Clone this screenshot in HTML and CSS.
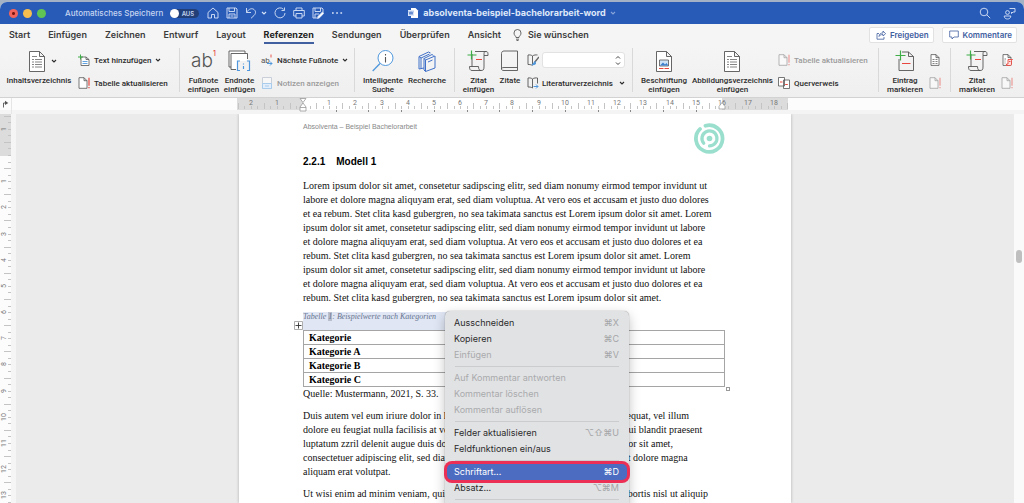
FILE: index.html
```html
<!DOCTYPE html>
<html lang="de">
<head>
<meta charset="utf-8">
<meta name="viewport" content="width=device-width, initial-scale=1">
<title>absolventa-beispiel-bachelorarbeit-word</title>
<link rel="stylesheet" href="styles.css">
</head>
<body>
<svg class="defs" aria-hidden="true">
  <symbol id="chev" viewBox="0 0 6 6"><path d="M1 2l2 2 2-2" fill="none" stroke="currentColor" stroke-width="1.1"/></symbol>
  <symbol id="doc-mark" viewBox="0 0 12 12"><path d="M1 .7h5l3 3v7.6H1zM6 .7v3h3" fill="#fff" stroke="#555" stroke-width=".8"/><path d="M11 .7v8M11 10v1.3" stroke="#e8473f" stroke-width="1.2"/></symbol>
  <symbol id="doc-lines" viewBox="0 0 16 21"><path d="M.5.5h10l5 5v15H.5zM10.500.5v5h5" fill="#fff" stroke="#555" stroke-width=".9"/><path d="M3 5.500h5M3 8.500h2m1 0h7M3 11h2m1 0h7M3 13.500h2m1 0h7M3 16h2m1 0h7" stroke="#777" stroke-width=".9"/></symbol>
  <symbol id="scroll" viewBox="0 0 22 22"><path d="M5 12V4M8 1.500h11c-2 0-2 1-2 4v11.500c0 3-1 3.500-3 3.500H5c-2 0-2.500-1.500-2.500-4h9c0 3 1 4 2.500 4M5 16.500V12M19 1.500c2 0 2 1.500 2 4h-4" fill="none" stroke="#555" stroke-width=".9"/><path d="M4.500.5v9M.5 5h9" stroke="#3fae49" stroke-width="1.200"/><path d="M9 9.500h6" stroke="#e8473f" stroke-width="1.100"/></symbol>
</svg>

<div class="window">
  <header class="titlebar">
    <div class="title-left">
      <span class="light red"></span><span class="light yellow"></span><span class="light green"></span>
      <label class="autosave" for="autosave">Automatisches Speichern</label>
      <span class="toggle"><input type="checkbox" id="autosave"><span class="knob"></span><span class="state">AUS</span></span>
      <button class="tb" aria-label="Start"><svg width="12" height="12" viewBox="0 0 12 12"><path d="M1 5.500L6 1l5 4.500V11H7.500V7.500h-3V11H1z"/></svg></button>
      <button class="tb" aria-label="Speichern"><svg width="12" height="12" viewBox="0 0 12 12"><path d="M1 1h9l1 1v9H1zM3 1v3.500h5.500V1M3 11V7h6v4M4.500 9h3"/></svg></button>
      <button class="tb undo" aria-label="Rückgängig"><svg width="12" height="12" viewBox="0 0 12 12"><path d="M1.500 1v4.500H6M1.500 5.500C4 1.500 7 1 9 2.500c2.500 2 1.500 4.500 0 6L6 11.300"/></svg><svg width="6" height="6"><use href="#chev"/></svg></button>
      <button class="tb" aria-label="Wiederholen"><svg width="12" height="12" viewBox="0 0 12 12"><path d="M9.500 2.300A5 5 0 1 0 11 6M10.500.5v3h-3"/></svg></button>
      <button class="tb" aria-label="Drucken"><svg width="12" height="12" viewBox="0 0 12 12"><path d="M3 3.500V1h6v2.500M3 9H.7V3.500h10.600V9H9M3 6.500h6V11H3z"/></svg></button>
      <button class="tb" aria-label="Speichern unter"><svg width="12" height="12" viewBox="0 0 12 12"><path d="M5 11H1V1h9l1 1v3M3 1v3.500h5.500V1M3 11V7h4"/><path d="M5.500 11.500l.6-2.200L10.500 5l1.300 1.300-4.300 4.500z" fill="#fff"/></svg></button>
      <button class="tb" aria-label="Mehr"><svg width="12" height="12" viewBox="0 0 12 12"><path d="M1 6h1.700M5.200 6h1.700M9.400 6h1.700" stroke-width="1.700"/></svg></button>
    </div>
    <div class="title-mid">
      <svg width="11" height="12" viewBox="0 0 11 12"><path d="M3 1h4.500L10 3.500V11H3z" fill="#fff"/><path d="M0 3h6v6H0z" fill="#dbe6f8"/><path d="M1 4.500l1 3 1-3 1 3 1-3" fill="none" stroke="#285bb8" stroke-width=".7"/></svg>
      <h1 class="doc-title">absolventa-beispiel-bachelorarbeit-word</h1>
      <svg class="dim" width="6" height="6"><use href="#chev"/></svg>
    </div>
    <div class="title-right">
      <button class="tb" aria-label="Suchen"><svg width="12" height="12" viewBox="0 0 12 12"><circle cx="5" cy="5" r="3.800"/><path d="M7.800 7.800l3.400 3.400"/></svg></button>
      <button class="tb" aria-label="Zusammenarbeit"><svg width="13" height="13" viewBox="0 0 13 13"><circle cx="4.500" cy="5.500" r="1.900"/><path d="M1.200 9h6.600c0 4-6.600 4-6.600 0zM6.500 1.500h5.500v3.500h-2L8.500 6.500V5"/></svg></button>
    </div>
  </header>

  <nav class="tabs">
    <a href="#">Start</a><a href="#">Einfügen</a><a href="#">Zeichnen</a><a href="#">Entwurf</a><a href="#">Layout</a><a href="#" class="active">Referenzen</a><a href="#">Sendungen</a><a href="#">Überprüfen</a><a href="#">Ansicht</a>
    <a href="#" class="wish"><svg width="9" height="12" viewBox="0 0 9 12"><path d="M3 8.500C3 7 1 6.500 1 4a3.500 3.500 0 0 1 7 0c0 2.500-2 3-2 4.500zM3 10.200h3M3.500 11.500h2" fill="none" stroke="#444" stroke-width=".8"/></svg>Sie wünschen</a>
    <div class="tab-actions">
      <button class="pill"><svg width="10" height="10" viewBox="0 0 10 10"><path d="M3 3.500H1v5.700h7V7M3 6.500c.3-2.500 1.500-3.500 4-3.500V1l2.600 2.700L7 6V4.500C5 4.500 4 5 3 6.500z"/></svg>Freigeben</button>
      <button class="pill"><svg width="10" height="10" viewBox="0 0 10 10"><path d="M.7 1h8.600v6H5L3 9V7H.7z"/></svg>Kommentare</button>
    </div>
  </nav>

  <div class="ribbon">
    <section class="group g-toc">
      <button class="big"><span class="art"><svg width="16" height="21"><use href="#doc-lines"/></svg><svg class="side" width="6" height="6"><use href="#chev"/></svg></span>Inhaltsverzeichnis</button>
      <div class="stack">
        <button class="small"><svg width="12" height="12" viewBox="0 0 12 12"><path d="M3 3h5l3 2.500v6H3zM8 3v2.500h3" fill="#fff" stroke="#555" stroke-width=".8"/><path d="M4.500 7.500h5M4.500 9.500h5" stroke="#4f97dc" stroke-width=".9"/><path d="M2.500.5v5M0 3h5" stroke="#3fae49"/></svg>Text hinzufügen<svg width="6" height="6"><use href="#chev"/></svg></button>
        <button class="small"><svg width="12" height="12"><use href="#doc-mark"/></svg>Tabelle aktualisieren</button>
      </div>
    </section>
    <section class="group g-notes">
      <button class="big"><span class="art ab">ab<sup>1</sup></span>Fußnote<br>einfügen</button>
      <button class="big"><span class="art"><svg width="23" height="22" viewBox="0 0 23 22"><path d="M3 17H1V1h16v2M8 19.500H3V3.500h16.500V9" fill="#fff" stroke="#555" stroke-width=".9"/><path d="M9 11h13v9H9z" fill="#f2f2f2"/><path d="M12 11h-2.500v9.500H12M19 11h2.500v9.500H19M15.500 13.500v1M15.500 16v3" fill="none" stroke="#4f97dc" stroke-width="1.200"/></svg></span>Endnote<br>einfügen</button>
      <div class="stack">
        <button class="small"><svg width="12" height="12" viewBox="0 0 12 12"><text x="0" y="9" class="mini">ab</text><path d="M10 .5v3" stroke="#e8473f" stroke-width=".9"/><path d="M6 9.500h5M9 7.500l2 2-2 2" fill="none" stroke="#4f97dc"/></svg>Nächste Fußnote<svg width="6" height="6"><use href="#chev"/></svg></button>
        <button class="small" disabled><svg width="12" height="12" viewBox="0 0 12 12"><path d="M1.500.5h9v11h-9z" fill="#f7f7f7" stroke="#c4cbd6" stroke-width=".9"/><path d="M1.500 6.500h9v5h-9z" fill="#e3eefa" stroke="#a9cbec"/><path d="M4 9h4" stroke="#a9cbec"/></svg>Notizen anzeigen</button>
      </div>
    </section>
    <section class="group g-search">
      <button class="big"><span class="art"><svg width="22" height="22" viewBox="0 0 22 22"><circle cx="13.500" cy="8" r="7.500" fill="#fff" stroke="#4f97dc"/><path d="M8 13.500L.7 21" stroke="#4f97dc" stroke-width="1.300"/><path d="M13.500 4v1.500M13.500 7v5.500" stroke="#555" stroke-width="1.100"/></svg></span>Intelligente<br>Suche</button>
      <button class="big"><span class="art"><svg width="18" height="21" viewBox="0 0 18 21"><path d="M6 17l-5 1V5.500L10.500 1l2 1M1 5.500l2 1.500v10.500M3 7l8.500-4M6 19V7.500L14 3.500l1.500 1M6 7.500L7.500 9M7.500 9l9.500-4v12l-9.500 3.500zM6 19l1.500 1.500M10 11l4.500-2" fill="none" stroke="#4170c8" stroke-width="1"/></svg></span>Recherche</button>
    </section>
    <section class="group g-cite">
      <button class="big"><span class="art"><svg width="22" height="22"><use href="#scroll"/></svg></span>Zitat<br>einfügen</button>
      <button class="big"><span class="art"><svg width="19" height="22" viewBox="0 0 19 22"><path d="M4 1h13.500v19.500H4c-3.500 0-3.500-3 0-3h13.500M1.500 19V3.500C1.500 2 2.500 1 4 1" fill="none" stroke="#555" stroke-width=".9"/></svg></span>Zitate</button>
      <div class="stack">
        <div class="small"><svg width="12" height="13" viewBox="0 0 12 13"><path d="M5.500 2C4 .8 2.500.8 1 1v9.500c1.500 0 3 0 4.500 1M5.500 2C7 .8 9 .8 10.500 1M5.500 2v9" fill="none" stroke="#555" stroke-width=".9"/><path d="M12 3L7.500 8.500" stroke="#666" stroke-width="1.400"/><path d="M8 7.500L5 11l3.500-1z" fill="#4f97dc" stroke="#4f97dc"/></svg><span class="combo"><input type="text" aria-label="Zitatformat"><svg width="6" height="11" viewBox="0 0 6 11"><path d="M1 3.500l2-2 2 2M1 7.500l2 2 2-2" fill="none" stroke="#444"/></svg></span></div>
        <button class="small"><svg width="12" height="12" viewBox="0 0 12 12"><path d="M5.500 2C4 .8 2.500.8 1 1v9c1.500 0 3 0 4.500 1M5.500 2C7 .8 9 .8 10.500 1v5.500M5.500 2v9" fill="none" stroke="#555" stroke-width=".9"/><path d="M6.500 9.500H11M9 7.500l2 2-2 2" fill="none" stroke="#4f97dc"/></svg><span class="fill">Literaturverzeichnis</span><svg width="6" height="6"><use href="#chev"/></svg></button>
      </div>
    </section>
    <section class="group g-caption">
      <button class="big"><span class="art"><svg width="16" height="21" viewBox="0 0 16 21"><path d="M.5.5h10l5 5v15H.5zM10.500.5v5h5" fill="#fff" stroke="#555" stroke-width=".9"/><path d="M3.500 9h9v6h-9z" fill="#cfe3f7" stroke="#555" stroke-width=".8"/><path d="M4 14.500l3-3 2 2 1.500-1.500 1.800 2.500z" fill="#3b7fcf"/><path d="M3 17.500h4.500m1 0H13" stroke="#e8473f"/></svg></span>Beschriftung<br>einfügen</button>
      <button class="big"><span class="art"><svg width="16" height="21"><use href="#doc-lines"/></svg></span>Abbildungsverzeichnis<br>einfügen</button>
      <div class="stack">
        <button class="small" disabled><svg class="faded" width="12" height="12"><use href="#doc-mark"/></svg>Tabelle aktualisieren</button>
        <button class="small"><svg width="12" height="12" viewBox="0 0 12 12"><path d="M.5.5h6v8.500h-6zM5.500 3h6v8.500h-6z" fill="#fff" stroke="#555" stroke-width=".8"/><path d="M2 5h2.500M7.200 7.500h2.600" stroke="#e8473f"/></svg>Querverweis</button>
      </div>
    </section>
    <section class="group g-mark">
      <button class="big"><span class="art"><svg width="20" height="22" viewBox="0 0 20 22"><path d="M4 9v11.500h14.500v-14l-5-4.500H7M13.500 2v4.500h5" fill="none" stroke="#555" stroke-width=".9"/><path d="M5.500.5v10M.5 5.500h10" stroke="#3fae49" stroke-width="1.200"/><path d="M7 13.500h8.500" stroke="#e8473f" stroke-width="1.200"/></svg></span>Eintrag<br>markieren</button>
      <div class="stack">
        <button class="small" aria-label="Index einfügen"><svg width="12" height="12" viewBox="0 0 12 12"><path d="M2 .6h5l3 3v7.800H2zM7 .6v3h3" fill="#fff" stroke="#555" stroke-width=".8"/><path d="M3.500 5.500h2m1 0h2M3.500 7.500h2m1 0h2M3.500 9.500h2m1 0h2" stroke="#666" stroke-width=".8"/></svg></button>
        <button class="small" disabled aria-label="Index aktualisieren"><svg class="faded" width="12" height="12"><use href="#doc-mark"/></svg></button>
      </div>
    </section>
    <section class="group g-auth">
      <button class="big"><span class="art"><svg width="22" height="22"><use href="#scroll"/></svg></span>Zitat<br>markieren</button>
      <div class="stack">
        <button class="small" aria-label="Rechtsgrundlagenverzeichnis einfügen"><svg width="12" height="12" viewBox="0 0 12 12"><path d="M2 .6h5l3 3v7.800H2zM7 .6v3h3" fill="#fff" stroke="#555" stroke-width=".8"/><path d="M3.500 5h1.500M3.500 7h1M3.500 9h1" stroke="#666" stroke-width=".8"/><path d="M7 5.500h4.500l-1 1V10c0 1-.5 1.500-1.500 1.500H5.500V10H7zM8 7.500h1.500" fill="#fbe0de" stroke="#e8473f" stroke-width=".9"/></svg></button>
        <button class="small" disabled aria-label="Verzeichnis aktualisieren"><svg class="faded" width="12" height="12"><use href="#doc-mark"/></svg></button>
      </div>
    </section>
  </div>

  <div class="ruler-row">
    <span class="tab-kind"><svg width="8" height="8" viewBox="0 0 8 8"><path d="M2.500 7.500V3H5" fill="none" stroke="#555" stroke-width=".9"/><path d="M4 .8L7.300 3 4 5z" fill="#555"/></svg></span>
    <div class="ruler-h">
      <svg id="ruler-h" width="552" height="15"></svg>
    </div>
  </div>

  <main class="work">
    <div class="ruler-v"><svg id="ruler-v" width="11" height="389"></svg></div>
    <div class="desk">
      <article class="page">
        <div class="page-head"><span>Absolventa – Beispiel Bachelorarbeit</span>
          <svg width="31" height="31" viewBox="0 0 31 31" fill="none" stroke="#9adfce" stroke-linecap="round"><path d="M11.500 2.800A13.300 13.300 0 1 1 6 6" stroke-width="3.800"/><path d="M15.500 22.900A7.500 7.500 0 1 0 9.700 20.200" stroke-width="3.300"/><circle cx="15.500" cy="15.500" r="2.800" fill="#9adfce" stroke="none"/></svg>
        </div>
        <h2><span>2.2.1</span>Modell 1</h2>
        <p class="para lead">Lorem ipsum dolor sit amet, consetetur sadipscing elitr, sed diam nonumy eirmod tempor invidunt ut<br>labore et dolore magna aliquyam erat, sed diam voluptua. At vero eos et accusam et justo duo dolores<br>et ea rebum. Stet clita kasd gubergren, no sea takimata sanctus est Lorem ipsum dolor sit amet. Lorem<br>ipsum dolor sit amet, consetetur sadipscing elitr, sed diam nonumy eirmod tempor invidunt ut labore<br>et dolore magna aliquyam erat, sed diam voluptua. At vero eos et accusam et justo duo dolores et ea<br>rebum. Stet clita kasd gubergren, no sea takimata sanctus est Lorem ipsum dolor sit amet. Lorem<br>ipsum dolor sit amet, consetetur sadipscing elitr, sed diam nonumy eirmod tempor invidunt ut labore<br>et dolore magna aliquyam erat, sed diam voluptua. At vero eos et accusam et justo duo dolores et ea<br>rebum. Stet clita kasd gubergren, no sea takimata sanctus est Lorem ipsum dolor sit amet.</p>
        <div class="table-block">
          <table>
            <caption>Tabelle <span class="field">1</span>: Beispielwerte nach Kategorien</caption>
            <tbody>
            <tr><th>Kategorie</th></tr>
            <tr><th>Kategorie A</th></tr>
            <tr><th>Kategorie B</th></tr>
            <tr><th>Kategorie C</th></tr>
            </tbody>
          </table>
          <svg class="move" width="9" height="9" viewBox="0 0 9 9"><path d="M.5.5h8v8h-8z" fill="#fff" stroke="#999" stroke-width=".8"/><path d="M4.500 1.500v6M1.500 4.500h6" stroke="#333" stroke-width=".9"/></svg>
          <span class="resize"></span>
        </div>
        <p class="para source">Quelle: Mustermann, 2021, S. 33.</p>
        <p class="para">Duis autem vel eum iriure dolor in hendrerit in vulputate velit esse molestie consequat, vel illum<br>dolore eu feugiat nulla facilisis at vero eros et accumsan et iusto odio dignissim qui blandit praesent<br>luptatum zzril delenit augue duis dolore te feugait nulla facilisi. Lorem ipsum dolor sit amet,<br>consectetuer adipiscing elit, sed diam nonummy nibh euismod tincidunt ut laoreet dolore magna<br>aliquam erat volutpat.</p>
        <p class="para">Ut wisi enim ad minim veniam, quis nostrud exerci tation ullamcorper suscipit lobortis nisl ut aliquip</p>

        <div class="menu" role="menu">
          <button role="menuitem">Ausschneiden<kbd>⌘X</kbd></button>
          <button role="menuitem">Kopieren<kbd>⌘C</kbd></button>
          <button role="menuitem" disabled>Einfügen<kbd>⌘V</kbd></button>
          <hr>
          <button role="menuitem" disabled>Auf Kommentar antworten</button>
          <button role="menuitem" disabled>Kommentar löschen</button>
          <button role="menuitem" disabled>Kommentar auflösen</button>
          <hr>
          <button role="menuitem">Felder aktualisieren<kbd>⌥⇧⌘U</kbd></button>
          <button role="menuitem">Feldfunktionen ein/aus</button>
          <hr>
          <button role="menuitem" class="current">Schriftart...<kbd>⌘D</kbd></button>
          <button role="menuitem">Absatz...<kbd>⌥⌘M</kbd></button>
          <hr>
        </div>
      </article>
    </div>
    <div class="scroll"><span class="thumb"></span></div>
  </main>
</div>
<script src="rulers.js"></script>
</body>
</html>
```
FILE: styles.css
```css
* { box-sizing: border-box; }
html, body { height: 100%; }
body { margin: 0; padding-top: 2px; background: #a3b2c4; font-family: Inter, "Liberation Sans", sans-serif; overflow: hidden; }
button { border: 0; background: none; padding: 0; margin: 0; font: inherit; color: inherit; }
h1, h2, p { margin: 0; }
svg { display: block; flex: none; }
.defs { position: absolute; width: 0; height: 0; }

.window { height: 100%; display: flex; flex-direction: column; border-radius: 7px 7px 0 0; overflow: hidden; background: #f5f5f5; }

/* Title bar */
.titlebar { flex: none; height: 22px; display: grid; grid-template-columns: 1fr auto 1fr; align-items: center; background: #285bb8; color: #fff; }
.title-left, .title-mid, .title-right { display: flex; align-items: center; }
.title-left { padding-left: 9px; gap: 7px; }
.light { width: 9px; height: 9px; border-radius: 50%; margin-right: -2px; flex: none; }
.red { background: radial-gradient(circle, #7a1510 0 1px, #f2635a 2px); }
.yellow { background: #f6be4f; }
.green { background: #5fc454; }
.autosave { font-size: 8px; font-weight: 500; line-height: 12px; color: #c6d5f0; margin-left: 14px; white-space: nowrap; }
.toggle { position: relative; width: 29px; height: 9px; margin-right: 1px; border-radius: 5px; background: #233f78; display: flex; align-items: center; justify-content: space-between; padding-right: 5px; }
.toggle input { position: absolute; inset: 0; margin: 0; opacity: 0; }
.knob { width: 9px; height: 9px; border-radius: 50%; background: #fff; }
.state { font-size: 6px; font-weight: 600; line-height: 9px; color: #c6d5f0; }
.tb { display: flex; align-items: center; gap: 4px; color: #d8e3f6; }
.tb svg { fill: none; stroke: #d8e3f6; stroke-width: 0.9px; }
.title-mid { gap: 4px; }
.doc-title { font-size: 9px; line-height: 12px; font-weight: 700; color: #dfe8f8; white-space: nowrap; }
.dim { color: #87a4d8; }
.tb .dim, .title-mid .dim { stroke: none; }
.title-right { justify-content: flex-end; gap: 12px; padding-right: 8px; }

/* Tabs */
.tabs { flex: none; height: 22px; display: flex; align-items: center; gap: 18px; padding: 0 7px 0 9px; background: #f5f5f5; font-size: 9px; font-weight: 600; line-height: 14px; color: #3c3c3c; }
.tabs a { color: inherit; text-decoration: none; white-space: nowrap; padding-top: 2px; border-bottom: 2px solid transparent; }
.tabs .active { color: #222; font-weight: 700; border-bottom-color: #41609f; }
.tabs .wish { display: flex; align-items: center; gap: 6px; margin-left: -6px; }
.tab-actions { margin-left: auto; display: flex; gap: 8px; }
.pill { height: 16px; display: flex; align-items: center; gap: 4px; padding: 0 4px 0 6px; background: #fff; border: 1px solid #e2e2e2; border-radius: 2px; color: #41609f; font-weight: 600; font-size: 8px; }
.pill svg { fill: none; stroke: #41609f; stroke-width: 0.8px; }

/* Ribbon */
.ribbon { flex: none; height: 52px; display: grid; grid-template-columns: 180px 175px 100px 178px 246px 72px 1fr; background: linear-gradient(#f5f5f5, #efefef); border-bottom: 1px solid #d2d2d2; font-family: Roboto, "Liberation Sans", sans-serif; font-size: 8px; font-weight: 500; line-height: 9px; color: #2c2c2c; }
.group { display: grid; align-items: start; padding-top: 4px; position: relative; }
.group:not(:last-child)::after { content: ""; position: absolute; right: 0; top: 2px; bottom: 5px; width: 1px; background: #d9d9d9; }
.big { display: flow-root; text-align: center; white-space: nowrap; justify-self: center; line-height: 9px; }
.art { display: flex; justify-content: center; align-items: center; height: 22px; margin-bottom: 4px; position: relative; }
.g-toc .art { right: 2px; }
.side { position: absolute; left: calc(50% + 14px); top: 8px; }
.ab { font-size: 19px; font-weight: 300; color: #555; line-height: 22px; font-family: Inter, sans-serif; }
.ab sup { font-size: 7px; font-weight: 500; line-height: 7px; color: #e8473f; align-self: flex-start; }
.stack { display: grid; grid-template: 20px 26px / minmax(0, 1fr); align-items: center; }
.small { display: flex; align-items: center; gap: 4px; min-width: 0; white-space: nowrap; text-align: left; }
.small:disabled { color: #9b9b9b; }
.faded { opacity: 0.5; }
.mini { font: 8px Roboto, sans-serif; fill: #555; }
.fill { flex: 1; }
.g-toc { grid-template-columns: 78px 1fr; }
.g-notes { grid-template-columns: 37px 35px 1fr; padding-left: 5px; }
.g-search { grid-template-columns: 44px 44px; padding-left: 6px; }
.g-cite { grid-template-columns: 37px 26px minmax(0, 1fr); padding: 4px 8px 0 5px; }
.g-caption { grid-template-columns: 54px 81px 1fr; padding-left: 4px; column-gap: 1px; }
.g-notes .stack, .g-cite .stack, .g-caption .stack { padding-left: 4px; }
.g-mark, .g-auth { grid-template-columns: 44px 1fr; padding-left: 4px; column-gap: 2px; }
.g-cite .small { gap: 3px; }
.combo { flex: 1; min-width: 0; height: 16px; display: flex; align-items: center; padding-right: 3px; background: #fff; border: 1px solid #e2e2e2; border-radius: 3px; }
.combo input { flex: 1; width: 100%; min-width: 0; height: 12px; border: 0; padding: 0 3px; background: none; font: inherit; }

/* Rulers */
.ruler-row { flex: none; display: flex; height: 16px; background: linear-gradient(#fcfcfc 0 12px, #f4f4f4 12px); padding-right: 10px; }
.tab-kind { width: 12px; padding: 2px 0 0 1px; border-right: 1px solid #e6e6e6; }
.ruler-h { flex: 1; display: flex; justify-content: center; }
.ruler-v { width: 11px; flex: none; overflow: hidden; background: #fcfcfc; }
.num { font: 7px Roboto, sans-serif; fill: #777; text-anchor: middle; }

/* Document */
.work { flex: 1; min-height: 0; display: flex; gap: 5px; }
.desk { flex: 1; min-width: 0; overflow: hidden; display: flex; justify-content: center; background: #ebebeb; }
.page { position: relative; flex: none; width: 552px; padding: 9px 66px 0 64px; background: #fff; box-shadow: 0 0 3px rgba(0, 0, 0, 0.25); color: #111; }
.page-head { display: flex; justify-content: space-between; align-items: flex-start; margin-bottom: 1px; font: 7px/8px "Liberation Sans", Arial, sans-serif; color: #888; }
h2 { display: flex; gap: 11px; margin-bottom: 10px; font: bold 10px/14px "Liberation Sans", Arial, sans-serif; color: #000; }
.para { font: 10px/14px "Liberation Serif", "Times New Roman", serif; white-space: nowrap; margin-bottom: 8px; }
.lead { margin-bottom: 7px; }
.table-block { position: relative; font-family: "Liberation Serif", "Times New Roman", serif; }
table { width: 100%; border-collapse: collapse; }
caption { height: 18px; background: linear-gradient(90deg, #e0e6f4 50%, transparent 50%); text-align: left; font-size: 8px; line-height: 10px; font-style: italic; color: #66748f; }
.field { background: #b9bfcc; }
th { height: 14px; padding: 0 5px; border: 1px solid #a5a5a5; text-align: left; font-size: 10px; line-height: 13px; color: #000; }
.move { position: absolute; left: -9px; top: 9px; }
.resize { position: absolute; right: -5px; bottom: -4px; width: 4px; height: 4px; border: 1px solid #999; background: #fff; }

/* Context menu */
.menu { position: absolute; left: 206px; top: 197px; width: 184px; padding: 4px 2px; border-radius: 5px; background: #e1e2e4; box-shadow: 0 0 1px rgba(0, 0, 0, 0.5), 0 4px 12px rgba(0, 0, 0, 0.25); font-size: 9px; line-height: 16px; color: #2b2b2b; }
.menu button { width: 100%; height: 16px; display: flex; justify-content: space-between; padding: 0 8px 0 7px; border-radius: 5px; }
.menu button:disabled { color: #a9aaac; }
.menu hr { height: 1px; margin: 3px 8px; border: 0; background: #cbccce; }
.menu kbd { font: inherit; color: #a4a5a7; }
.menu .current, .menu .current kbd { color: #fff; }
.menu .current { background: #4b6cc0; box-shadow: 0 0 0 3px #ec2f55; }

.scroll { width: 10px; margin-left: -5px; flex: none; background: #fafafa; display: flex; justify-content: center; padding-top: 136px; }
.thumb { width: 6px; height: 13px; border-radius: 3px; background: #bfbfbf; }
```
FILE: rulers.js
```js
const NS = "http://www.w3.org/2000/svg";
const CM = 26.18;

function add(parent, name, attrs, text) {
  const el = document.createElementNS(NS, name);
  for (const key in attrs) el.setAttribute(key, attrs[key]);
  if (text !== undefined) el.textContent = text;
  parent.appendChild(el);
}

// Horizontal ruler: text area from 0 to 16 cm, margins on both sides
const h = document.getElementById("ruler-h");
const zero = 66;
add(h, "rect", { x: 0, y: 0, width: 551, height: 12, fill: "#dcdcdc" });
add(h, "rect", { x: zero, y: 0, width: 419, height: 12, fill: "#fff" });
for (let q = -10; q <= 74; q++) {
  const x = Math.round(zero + q * CM / 4);
  const half = Math.abs(q % 4) === 2;
  add(h, "rect", { x, y: half ? 5 : 8, width: 1, height: half ? 6 : 3, fill: "#c4c4c4" });
  if (q % 4 === 0 && q !== 0) add(h, "text", { x, y: 7, class: "num" }, Math.abs(q / 4));
}
for (let t = 1; t < 13; t++) {
  add(h, "rect", { x: Math.round(zero + t * CM * 1.25), y: 12, width: 1, height: 2, fill: "#888" });
}
add(h, "path", { d: "M63 .5h6l-3 4zM63 9l3-4 3 4v4h-6zM63 9.500h6", fill: "#fff", stroke: "#999", "stroke-width": 0.8 });
add(h, "path", { d: "M482 11V8.500l3-4 3 4V11z", fill: "#fff", stroke: "#999", "stroke-width": 0.8 });

// Vertical ruler
const v = document.getElementById("ruler-v");
add(v, "rect", { x: 0, y: 0, width: 11, height: 42, fill: "#dcdcdc" });
for (let q = -6; q < 54; q++) {
  const y = Math.round(41 + q * CM / 4);
  const half = Math.abs(q % 4) === 2;
  add(v, "rect", { x: half ? 4 : 8, y, width: half ? 7 : 3, height: 1, fill: "#c4c4c4" });
  if (q % 4 === 0 && q !== 0) {
    add(v, "text", { transform: `translate(6 ${y}) rotate(-90)`, class: "num" }, Math.abs(q / 4));
  }
}
```
